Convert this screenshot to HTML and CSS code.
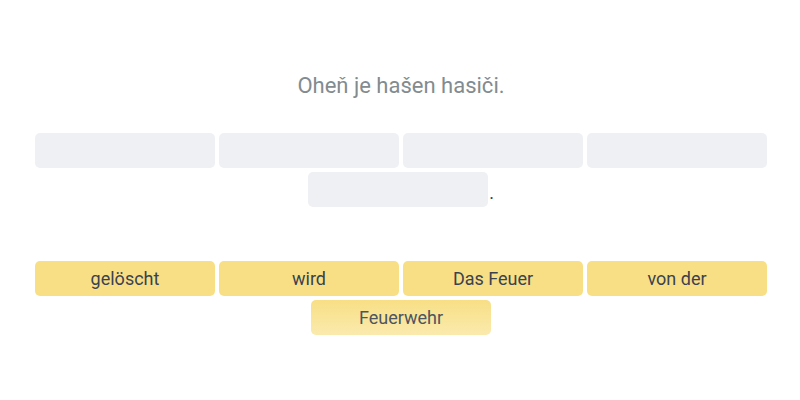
FILE: index.html
```html
<!DOCTYPE html>
<html lang="de">
<head>
<meta charset="utf-8">
<link rel="stylesheet" href="styles.css">
</head>
<body>
<main class="exercise">
  <p class="prompt">Oheň je hašen hasiči.</p>
  <div class="answer">
    <div class="slot"></div>
    <div class="slot"></div>
    <div class="slot"></div>
    <div class="slot"></div>
    <div class="slot-group"><div class="slot"></div><span class="dot">.</span></div>
  </div>
  <div class="bank">
    <div class="word">gelöscht</div>
    <div class="word">wird</div>
    <div class="word">Das Feuer</div>
    <div class="word">von der</div>
    <div class="word word-fading">Feuerwehr</div>
  </div>
</main>
</body>
</html>
```

FILE: styles.css
```css
html, body {
  margin: 0;
  padding: 0;
  background: #ffffff;
}
body {
  font-family: Roboto, "Noto Sans", "Liberation Sans", sans-serif;
}
.exercise {
  padding: 0 0 0 2px;
}
.prompt {
  margin: 0;
  padding-top: 72px;
  height: 28px;
  text-align: center;
  font-size: 22px;
  line-height: 28px;
  color: #838b8f;
}
.answer {
  margin-top: 33px;
  display: flex;
  flex-wrap: wrap;
  justify-content: center;
  gap: 4px;
}
.slot {
  width: 180px;
  height: 35px;
  border-radius: 5px;
  background: #eff0f4;
}
.slot-group {
  display: flex;
  align-items: center;
}
.dot {
  margin-left: 1px;
  font-size: 18px;
  line-height: 20px;
  padding-top: 7px;
  color: #36404d;
}
.bank {
  margin-top: 54px;
  display: flex;
  flex-wrap: wrap;
  justify-content: center;
  gap: 4px;
}
.word {
  width: 180px;
  height: 35px;
  border-radius: 5px;
  background: #f8df85;
  color: #3a4250;
  font-size: 18px;
  line-height: 35px;
  text-align: center;
}
.word-fading {
  background: linear-gradient(#f8df85, #faeaad);
  color: #4c5561;
}
```
